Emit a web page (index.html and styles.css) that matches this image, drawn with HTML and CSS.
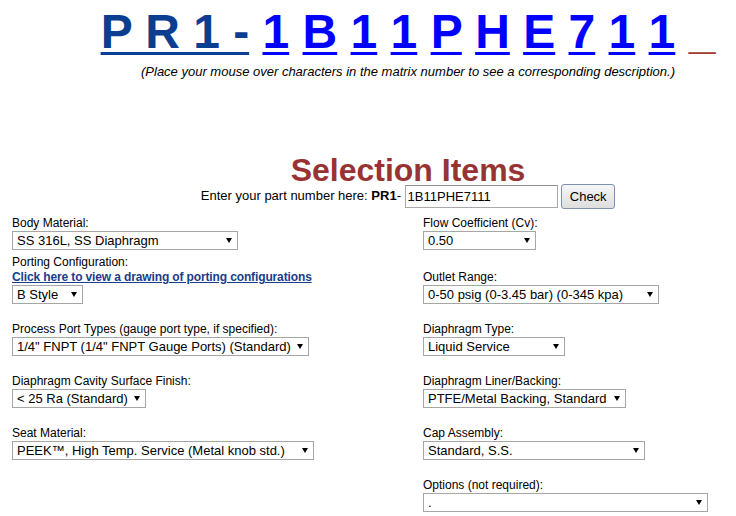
FILE: index.html
```html
<!DOCTYPE html>
<html lang="en">
<head>
  <meta charset="UTF-8">
  <meta name="viewport" content="width=device-width, initial-scale=1.0">
  <title>PR1 Selection Items</title>
  <link rel="stylesheet" href="styles.css">
</head>
<body>
  <div class="page">
    <div class="matrix">
      <a class="prefix" href="#">P R 1 -</a> <a href="#">1</a> <a href="#">B</a> <a href="#">1</a> <a href="#">1</a> <a href="#">P</a> <a href="#">H</a> <a href="#">E</a> <a href="#">7</a> <a href="#">1</a> <a href="#">1</a> <span class="blank">_</span>
    </div>
    <p class="hint">(Place your mouse over characters in the matrix number to see a corresponding description.)</p>
    <h2>Selection Items</h2>
    <form class="lookup" onsubmit="return false">
      Enter your part number here: <b>PR1</b>- <input type="text" id="part-number" value="1B11PHE7111"> <button type="submit">Check</button>
    </form>
  </div>

  <div class="fields">
    <div class="col col-left">
      <div class="field tight">
        <label for="body-material">Body Material:</label>
        <span class="select"><select id="body-material"><option>SS 316L, SS Diaphragm</option></select></span>
      </div>
      <div class="field">
        <label for="porting">Porting Configuration:</label>
        <a class="drawing-link" href="#">Click here to view a drawing of porting configurations</a>
        <span class="select"><select id="porting"><option>B Style</option></select></span>
      </div>
      <div class="field">
        <label for="port-types">Process Port Types (gauge port type, if specified):</label>
        <span class="select"><select id="port-types"><option>1/4" FNPT (1/4" FNPT Gauge Ports) (Standard)</option></select></span>
      </div>
      <div class="field">
        <label for="surface-finish">Diaphragm Cavity Surface Finish:</label>
        <span class="select"><select id="surface-finish"><option>&lt; 25 Ra (Standard)</option></select></span>
      </div>
      <div class="field">
        <label for="seat-material">Seat Material:</label>
        <span class="select"><select id="seat-material"><option>PEEK™, High Temp. Service (Metal knob std.)</option></select></span>
      </div>
    </div>

    <div class="col col-right">
      <div class="field loose">
        <label for="flow-coefficient">Flow Coefficient (Cv):</label>
        <span class="select"><select id="flow-coefficient"><option>0.50</option></select></span>
      </div>
      <div class="field">
        <label for="outlet-range">Outlet Range:</label>
        <span class="select"><select id="outlet-range"><option>0-50 psig (0-3.45 bar) (0-345 kpa)</option></select></span>
      </div>
      <div class="field">
        <label for="diaphragm-type">Diaphragm Type:</label>
        <span class="select"><select id="diaphragm-type"><option>Liquid Service</option></select></span>
      </div>
      <div class="field">
        <label for="liner">Diaphragm Liner/Backing:</label>
        <span class="select"><select id="liner"><option>PTFE/Metal Backing, Standard</option></select></span>
      </div>
      <div class="field">
        <label for="cap-assembly">Cap Assembly:</label>
        <span class="select"><select id="cap-assembly"><option>Standard, S.S.</option></select></span>
      </div>
      <div class="field">
        <label for="options">Options (not required):</label>
        <span class="select"><select id="options"><option>.</option></select></span>
      </div>
    </div>
  </div>
</body>
</html>
```

FILE: styles.css
```css
* {
  box-sizing: border-box;
}
body {
  margin: 0;
  font-family: 'Liberation Sans', Arial, sans-serif;
  color: #000;
  background-color: #fff;
}
.page {
  padding-left: 80px;
  text-align: center;
}
.matrix {
  margin-top: 4px;
  font-size: 48px;
  font-weight: bold;
  line-height: 55px;
  white-space: nowrap;
}
.matrix a {
  color: #0000ff;
  text-decoration: underline;
  text-decoration-thickness: 3px;
  text-underline-offset: 4px;
}
.matrix a.prefix {
  color: #0b3d91;
}
.matrix .blank {
  color: #9c3a33;
}
.hint {
  margin: 5px 0 0;
  font-size: 13px;
  font-style: italic;
  line-height: 15px;
}
h2 {
  margin: 79px 0 0;
  font-size: 32px;
  line-height: 25px;
  color: #993333;
}
.lookup {
  margin: 0;
  font-size: 13px;
  line-height: 25px;
}
.lookup input {
  width: 153px;
  height: 23px;
  padding: 0 2px;
  border: 1px solid #a9a9a9;
  border-top-color: #8e8f8f;
  font-family: inherit;
  font-size: 13px;
  vertical-align: middle;
}
.lookup button {
  width: 54px;
  height: 25px;
  padding: 0;
  border: 1px solid #7c8fb0;
  border-radius: 3px;
  background: linear-gradient(#f6f6f6, #dedede);
  font-family: inherit;
  font-size: 13px;
  color: #000;
  vertical-align: middle;
  cursor: pointer;
}
.fields {
  display: flex;
  margin-top: 6px;
  padding-left: 12px;
}
.col {
  display: flex;
  flex-direction: column;
}
.col-left {
  width: 411px;
}
.field {
  display: flex;
  flex-direction: column;
  align-items: flex-start;
  margin-bottom: 17px;
}
.field.tight {
  margin-bottom: 4px;
}
.field.loose {
  margin-bottom: 19px;
}
.field label {
  display: block;
  font-size: 12px;
  line-height: 16px;
}
.drawing-link {
  display: block;
  font-size: 12px;
  font-weight: bold;
  line-height: 15px;
  letter-spacing: -0.13px;
  color: #1a3c8c;
}
.select {
  position: relative;
  display: block;
}
.select::after {
  content: "";
  position: absolute;
  right: 6px;
  top: 7px;
  border-left: 3px solid transparent;
  border-right: 3px solid transparent;
  border-top: 5px solid #000;
  pointer-events: none;
}
.select select {
  display: block;
  height: 19px;
  padding: 0 14px 0 4px;
  border: 1px solid #a6a6a6;
  border-radius: 0;
  background-color: #fff;
  font-family: inherit;
  font-size: 13px;
  line-height: 17px;
  color: #000;
  appearance: none;
  -webkit-appearance: none;
}
#body-material { width: 226px; }
#porting { width: 71px; }
#port-types { width: 297px; }
#surface-finish { width: 134px; }
#seat-material { width: 302px; }
#flow-coefficient { width: 113px; }
#outlet-range { width: 236px; }
#diaphragm-type { width: 142px; }
#liner { width: 203px; }
#cap-assembly { width: 222px; }
#options { width: 285px; }
```
